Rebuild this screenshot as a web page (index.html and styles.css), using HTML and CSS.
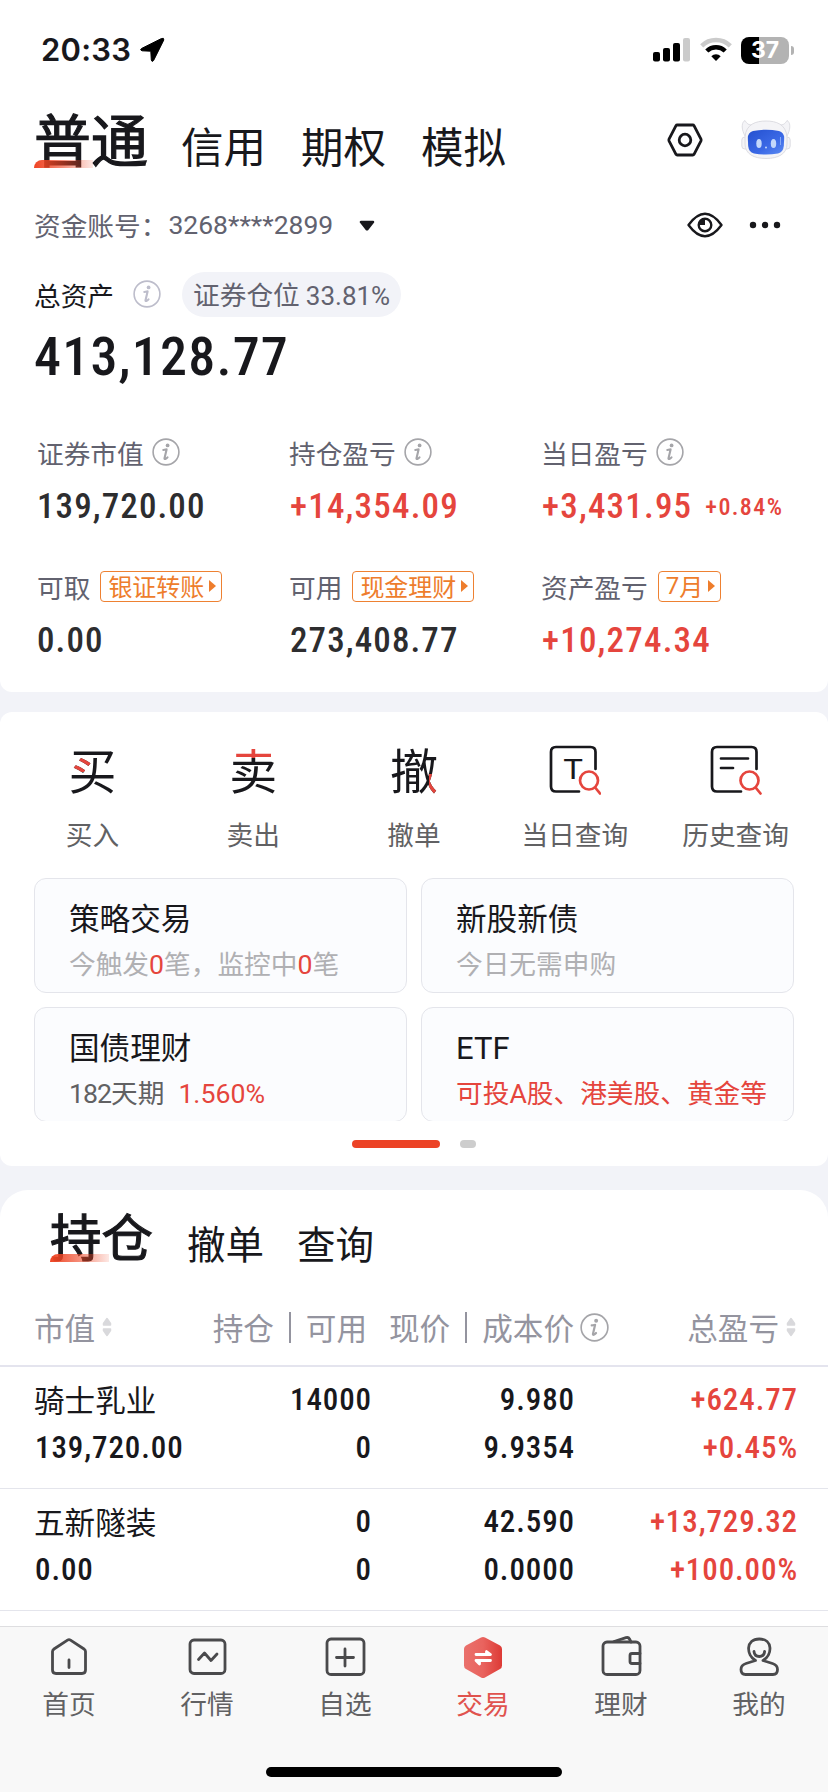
FILE: index.html
```html
<!DOCTYPE html>
<html lang="zh-CN">
<head>
<meta charset="utf-8">
<title>交易</title>
<link rel="stylesheet" href="styles.css">
</head>
<body>
<svg class="defs" width="0" height="0">
  <defs>
    <symbol id="info" viewBox="0 0 28 28">
      <circle cx="14" cy="14" r="12.9" fill="none" stroke="currentColor" stroke-width="1.6"/>
      <circle cx="15.6" cy="7.4" r="1.9" fill="currentColor"/>
      <path d="M11.300 12c2-.2 2.700-.6 3.300-.6L12.500 20.200c-.3 1.500 1.500.9 3-.9" fill="none" stroke="currentColor" stroke-width="2.100" stroke-linecap="round" stroke-linejoin="round"/>
    </symbol>
    <symbol id="sort" viewBox="0 0 10 20">
      <path d="M5 1.500 8.500 6.500V8H1.500V6.500Z M5 18.500 8.500 13.500V12H1.500V13.500Z" fill="#d9d9dc" stroke="#d9d9dc" stroke-width="1.500" stroke-linejoin="round"/>
    </symbol>
    <linearGradient id="hexfill"><stop offset="0" stop-color="#ea716c"/><stop offset=".5" stop-color="#e9635e"/><stop offset="1" stop-color="#dd3a35"/></linearGradient>
    <linearGradient id="face" x1="0" y1="0" x2="1" y2="1"><stop offset="0" stop-color="#2450cf"/><stop offset=".6" stop-color="#3b69e6"/><stop offset="1" stop-color="#5c8bf2"/></linearGradient>
  </defs>
</svg>

<main class="screen">
  <section class="panel account">
    <header class="status">
      <span class="clock">20:33</span>
      <svg class="arrow" width="26" height="26" viewBox="0 0 26 26"><path d="M22.500 1.500 2.500 11.500Q.5 13 3 13.800L11.800 14.200 12.300 23Q12.800 25.500 14.600 23.500L24.800 3Q25.200 .5 22.500 1.500Z" stroke="#000" stroke-width="1"/></svg>
      <svg class="signal" width="38" height="24" viewBox="0 0 38 24"><rect y="14" width="7" height="9.500" rx="2"/><rect x="10" y="10" width="7" height="13.500" rx="2"/><rect x="20" y="5" width="7" height="18.500" rx="2"/><rect x="30" width="7" height="23.500" rx="2" fill="#cbcbcb"/></svg>
      <svg class="wifi" width="32" height="25" viewBox="0 0 32 25"><path d="M1.700 8.800A20.500 20.500 0 0 1 30.300 8.800" fill="none" stroke="#cbcbcb" stroke-width="4.500"/><path d="M6.800 14A13.300 13.300 0 0 1 25.200 14" fill="none" stroke="#000" stroke-width="4.500"/><path d="M16 24 11.300 19.200A6.600 6.600 0 0 1 20.700 19.200Z"/></svg>
      <span class="battery">37</span>
    </header>

    <nav class="modes">
      <span class="mode current">普通</span><span class="mode">信用</span><span class="mode">期权</span><span class="mode">模拟</span>
      <svg class="nut" width="36" height="34" viewBox="0 0 36 34" fill="none" stroke="#18181c" stroke-width="2.800" stroke-linejoin="round"><path d="M10.200 2H25.800Q26.600 2 27 2.700L34 16.200Q34.300 17 34 17.800L27 31.300Q26.600 32 25.800 32H10.200Q9.400 32 9 31.300L2 17.800Q1.700 17 2 16.200L9 2.700Q9.400 2 10.200 2Z"/><circle cx="18" cy="17" r="5.800"/></svg>
      <svg class="robot" width="50" height="40" viewBox="0 0 50 40"><g fill="#f4f4f7" stroke="#d6d6dc" stroke-width=".8"><path d="M3 15C0 8 1 3 4 1.500 6 5 8 6 11 6L12 12 4 17Z"/><path d="M47 15C50 8 49 3 46 1.500 44 5 42 6 39 6L38 12 46 17Z"/><rect x=".8" y="18" width="7" height="12" rx="3"/><rect x="42.200" y="18" width="7" height="12" rx="3"/><path d="M4 18C5 5 15 2 25 2S45 5 46 18V25C46 35 37 39.500 25 39.500S4 35 4 25Z"/></g><path d="M12 12Q25 9.500 38 12Q43 13.500 43.200 19L42.800 27Q42.300 33 37 34.500Q25 36.500 13 34.500Q7.700 33 7.200 27L6.800 19Q7 13.500 12 12Z" fill="url(#face)"/><ellipse cx="18" cy="24.500" rx="2.700" ry="4.500" fill="#c3d8fb"/><ellipse cx="32.500" cy="24.500" rx="2.700" ry="4.500" fill="#c3d8fb"/><circle cx="25" cy="28.500" r="1" fill="#c3d8fb"/><path d="M39.500 18V26" stroke="#86a8f5" stroke-width="1"/></svg>
    </nav>

    <div class="acct">
      <span>资金账号：</span><span class="num acctno">3268****2899</span>
      <svg class="caret" width="16" height="11" viewBox="0 0 16 11"><path d="M2 2H14L8.500 9Q8 9.500 7.500 9Z" fill="#18181c" stroke="#18181c" stroke-width="2.500" stroke-linejoin="round"/></svg>
      <svg class="eye" width="36" height="26" viewBox="0 0 36 26" fill="none" stroke="#18181c" stroke-width="2.400"><path d="M1.500 13C7 5.500 12 1.800 18 1.800S29 5.500 34.500 13C29 20.500 24 24.200 18 24.200S7 20.500 1.500 13Z" stroke-linejoin="round"/><circle cx="18" cy="13" r="6.300"/><path d="M18 13V6.700A6.300 6.300 0 0 0 11.700 13Z" fill="#18181c" stroke="none"/></svg>
      <svg class="more" width="32" height="8" viewBox="0 0 32 8" fill="#18181c"><circle cx="4" cy="4" r="3.200"/><circle cx="16" cy="4" r="3.200"/><circle cx="28" cy="4" r="3.200"/></svg>
    </div>

    <div class="total">
      <span>总资产</span><svg class="info lilac"><use href="#info"/></svg>
      <span class="pill">证券仓位 <b class="num">33.81%</b></span>
    </div>
    <div class="num grand">413,128.77</div>

    <div class="stats">
      <div class="stat"><div class="label">证券市值<svg class="info"><use href="#info"/></svg></div><div class="num value">139,720.00</div></div>
      <div class="stat"><div class="label">持仓盈亏<svg class="info"><use href="#info"/></svg></div><div class="num value up">+14,354.09</div></div>
      <div class="stat"><div class="label">当日盈亏<svg class="info"><use href="#info"/></svg></div><div class="num value up">+3,431.95<small>+0.84%</small></div></div>
      <div class="stat"><div class="label">可取<span class="tag">银证转账<i></i></span></div><div class="num value">0.00</div></div>
      <div class="stat"><div class="label">可用<span class="tag">现金理财<i></i></span></div><div class="num value shift">273,408.77</div></div>
      <div class="stat"><div class="label">资产盈亏<span class="tag"><b class="num">7</b>月<i></i></span></div><div class="num value up">+10,274.34</div></div>
    </div>
  </section>

  <section class="panel services">
    <div class="actions">
      <div class="action"><span class="glyph buy">买</span>买入</div>
      <div class="action"><span class="glyph sell">卖</span>卖出</div>
      <div class="action"><span class="glyph cancel">撤</span>撤单</div>
      <div class="action"><svg class="glyph" width="52" height="52" viewBox="0 0 52 52" fill="none" stroke="#18181c" stroke-width="2.700" stroke-linecap="round"><path d="M30 46.500H7Q2 46.500 2 41.500V7Q2 2 7 2H41.500Q46.500 2 46.500 7V24"/><text transform="translate(24 34) scale(1.18 1)" class="tee">T</text><g stroke="#e5453d"><circle cx="40" cy="35.500" r="9"/><path d="M46.500 43 51 48.500"/></g></svg>当日查询</div>
      <div class="action"><svg class="glyph" width="52" height="52" viewBox="0 0 52 52" fill="none" stroke="#18181c" stroke-width="2.700" stroke-linecap="round"><path d="M31 46.500H7Q2 46.500 2 41.500V7Q2 2 7 2H41.500Q46.500 2 46.500 7V24M11 13.500H38M11 23H23"/><g stroke="#e5453d"><circle cx="39.500" cy="35.500" r="9"/><path d="M46 43 50.500 48.500"/></g></svg>历史查询</div>
    </div>
    <div class="tiles">
      <div class="tile"><h3>策略交易</h3><p>今触发<b class="num up">0</b>笔，监控中<b class="num up">0</b>笔</p></div>
      <div class="tile"><h3>新股新债</h3><p>今日无需申购</p></div>
      <div class="tile"><h3>国债理财</h3><p class="dark"><b class="num days">182</b>天期<b class="num up rate">1.560%</b></p></div>
      <div class="tile"><h3><span class="num etf">ETF</span></h3><p class="up">可投<b class="num">A</b>股、港美股、黄金等</p></div>
    </div>
    <div class="pager"><i class="on"></i><i></i></div>
  </section>

  <section class="panel holdings">
    <nav class="tabs"><span class="tab current">持仓</span><span class="tab">撤单</span><span class="tab">查询</span></nav>
    <div class="row head">
      <div>市值<svg class="sort"><use href="#sort"/></svg></div>
      <div>持仓<i class="bar"></i>可用</div>
      <div>现价<i class="bar"></i>成本价<svg class="info"><use href="#info"/></svg></div>
      <div>总盈亏<svg class="sort"><use href="#sort"/></svg></div>
    </div>
    <div class="row">
      <div><span class="name">骑士乳业</span><span class="num">139,720.00</span></div>
      <div><span class="num">14000</span><span class="num">0</span></div>
      <div><span class="num">9.980</span><span class="num">9.9354</span></div>
      <div class="up"><span class="num">+624.77</span><span class="num">+0.45%</span></div>
    </div>
    <div class="row">
      <div><span class="name">五新隧装</span><span class="num">0.00</span></div>
      <div><span class="num">0</span><span class="num">0</span></div>
      <div><span class="num">42.590</span><span class="num">0.0000</span></div>
      <div class="up"><span class="num">+13,729.32</span><span class="num">+100.00%</span></div>
    </div>
  </section>

  <footer class="dock">
    <div class="items">
      <div class="item"><svg width="44" height="44" viewBox="0 0 44 44"><path d="M20.500 4.200Q22 3.200 23.500 4.200L37 13Q38.500 14 38.500 15.500V34Q38.500 37.500 35 37.500H9Q5.500 37.500 5.500 34V15.500Q5.500 14 7 13ZM22 24V31.500"/></svg>首页</div>
      <div class="item"><svg width="44" height="44" viewBox="0 0 44 44"><rect x="5" y="4" width="35" height="33.500" rx="4"/><path d="M13.500 23.500 19.500 17 26 24.500 32 18"/></svg>行情</div>
      <div class="item"><svg width="44" height="44" viewBox="0 0 44 44"><rect x="4" y="3" width="37" height="35.500" rx="4"/><path d="M22 13V30M13.500 21.500H30.500"/></svg>自选</div>
      <div class="item active"><svg width="44" height="44" viewBox="0 0 44 44"><path class="hex" d="M20 1.400Q22 .4 24 1.400L39 9.500Q41 10.700 41 13V29.500Q41 32 39 33L24 41.600Q22 42.600 20 41.600L5 33Q3 32 3 29.500V13Q3 10.700 5 9.500Z"/><path class="swap" d="M15 18.500H29.500L25.500 15.500V18.500M29.500 24.500H15L18.500 28V24.500"/></svg>交易</div>
      <div class="item"><svg width="44" height="44" viewBox="0 0 44 44"><rect x="4" y="6" width="37" height="32.500" rx="4"/><path d="M15 5.500 27 1.700Q29.500 1 30.500 3L32 6M41 17.500H33Q31 17.500 31 19.500V25.500Q31 27.500 33 27.500H41"/></svg>理财</div>
      <div class="item"><svg width="44" height="44" viewBox="0 0 44 44"><path d="M18.500 24.500C9 19 8.500 3 22.300 3S35.600 19 26 24.500L35.500 27.500Q40.500 29 40.500 33.500Q40.500 38.500 36 38.500H8.500Q4 38.500 4 33.500Q4 29 9 27.500ZM17 15.500Q17.500 20.500 22.300 20.500T27.600 15.500"/></svg>我的</div>
    </div>
    <div class="homebar"></div>
  </footer>
</main>
</body>
</html>
```
FILE: styles.css
```css
* { box-sizing: border-box; }
body {
  margin: 0;
  background: #f2f3f8;
  font-family: "Noto Sans CJK SC", sans-serif;
  color: #18181c;
}
.defs { display: block; height: 0; }
svg { flex: none; }
b { font-weight: 400; line-height: 1; }
.screen { width: 828px; height: 1792px; display: flex; flex-direction: column; overflow: hidden; }
.panel { flex: none; background: #fff; }
.num { font-family: Roboto, "Noto Sans", sans-serif; font-stretch: 87%; }
b.num, .acctno { font-stretch: 100%; }
.up, .tile .up { color: #e5453d; }

.account { height: 692px; border-radius: 0 0 12px 12px; }

.status { display: flex; align-items: center; height: 100px; padding: 0 34px 0 41px; }
.clock { font: 600 31px/40px Inter, sans-serif; letter-spacing: 0.2px; }
.arrow { margin-left: 8px; }
.signal { margin-left: auto; }
.wifi { margin: 0 9px 2px 9px; }
.battery {
  position: relative;
  width: 48px; height: 27px;
  border-radius: 8px;
  background: linear-gradient(90deg, #000 18px, #b3b3b3 18px);
  color: #fff;
  font: 700 23px/27px Inter, sans-serif;
  text-align: center;
  margin-right: 5px;
}
.battery::after {
  content: "";
  position: absolute;
  right: -5px; top: 9px;
  width: 3px; height: 9px;
  border-radius: 0 3px 3px 0;
  background: #b3b3b3;
}

.modes { display: flex; height: 80px; padding: 0 37px 0 34px; gap: 36px; }
.mode { font-size: 42.500px; line-height: 60px; padding-top: 15px; margin-right: -1px; }
.mode.current { font-size: 57px; line-height: 74px; height: 80px; padding: 0; margin-right: -3px; position: relative; -webkit-text-stroke: 1.200px #18181c; }
.current::after {
  content: "";
  position: absolute;
  left: 0; bottom: 12px;
  width: 59px; height: 8px;
  border-radius: 8px 0 0 0;
  background: linear-gradient(90deg, #ef4423, rgba(239, 68, 35, .6) 50%, rgba(239, 68, 35, .12));
}
.nut { margin: 23px 0 0 auto; }
.robot { margin: 19px 0 0 2px; }

.acct { display: flex; align-items: center; height: 90px; padding: 0 47px 0 34px; font-size: 26.7px; color: #62626f; }
.acct > span { padding-bottom: 1px; }
.acctno { font-size: 26.5px; margin-left: 1px; }
.caret { margin-left: 26px; }
.eye { margin-left: auto; }
.more { margin-left: 26px; }

.total { display: flex; align-items: center; height: 46px; margin-top: 1px; padding-left: 34px; font-size: 26.7px; }
.info { width: 28px; height: 28px; color: #a5a5a9; }
.total .info { margin: 0 21px 0 19px; color: #bdbdcb; }
.pill { height: 45px; line-height: 44px; border-radius: 23px; background: #f2f3f8; color: #62626f; padding: 0 11px; white-space: nowrap; }
.pill .num { font-size: 26px; }
.grand { font-size: 54px; font-weight: 500; line-height: 64px; margin: 8px 0 0 34px; letter-spacing: 1.2px; }

.stats { display: grid; grid-template-columns: 252px 252px 1fr; padding: 43px 0 0 37px; }
.stat { height: 134px; }
.label { display: flex; align-items: center; height: 40px; font-size: 26.7px; color: #62626f; white-space: nowrap; }
.label .info { margin-left: 8px; }
.value { font-size: 35px; font-weight: 500; line-height: 40px; margin-top: 15px; letter-spacing: 1.1px; color: #2d2d2f; white-space: nowrap; }
.value.up { color: #e5453d; letter-spacing: 1.200px; }
.value.up, .value.shift { padding-left: 1px; }
.value small { font-size: 24px; line-height: 1; letter-spacing: 1.4px; margin-left: 13px; vertical-align: 3px; }
.tag { display: flex; align-items: center; height: 31px; margin-left: 10px; padding: 0 5px 0 7px; border: 1.500px solid #ee8132; border-radius: 4px; font-size: 24px; line-height: 28px; color: #ee7d2c; }
.tag i { margin-left: 5px; border: 6px solid transparent; border-left: 7px solid #ee7d2c; border-right: 0; }

.services { height: 454px; margin-top: 20px; border-radius: 12px; }
.actions { display: flex; padding: 31px 12px 0; height: 166px; }
.action { flex: 1; display: flex; flex-direction: column; align-items: center; font-size: 26.7px; line-height: 34px; color: #616163; }
.glyph { height: 56px; margin-bottom: 18px; font-size: 48px; line-height: 51px; background-clip: text; -webkit-background-clip: text; color: transparent; }
svg.glyph { margin-top: 2px; height: 52px; margin-bottom: 20px; }
.buy { background-image: linear-gradient(#e5453d, #e5453d), linear-gradient(#18181c, #18181c); background-size: 20px 17px, auto; background-position: 4px 12px, 0 0; background-repeat: no-repeat, repeat; }
.sell { background-image: linear-gradient(#e5453d 15px, #18181c 15px); }
.cancel { background-image: linear-gradient(#e5453d, #e5453d), linear-gradient(#18181c, #18181c); background-size: 9px 20px, auto; background-position: 39px 31px, 0 0; background-repeat: no-repeat, repeat; }
.tee { font: 400 28px Roboto, sans-serif; fill: #18181c; stroke: none; text-anchor: middle; }

.tiles { display: grid; grid-template-columns: 373px 373px; grid-auto-rows: 115px; gap: 14px; height: 243px; padding-left: 34px; overflow: hidden; }
.tile { border: 1.500px solid #e4e5eb; border-radius: 12px; background: #fbfcfe; padding: 18px 0 0 34px; white-space: nowrap; }
.tile h3 { margin: 0; font-size: 30.600px; font-weight: 400; line-height: 40px; height: 40px; }
.tile p { margin: 7px 0 0; font-size: 26.700px; line-height: 38px; color: #b0b0b3; }
.tile p.dark { color: #616163; }
.tile p .days { letter-spacing: -1px; }
.tile p .rate { margin-left: 14px; }
.tile .etf { font-size: 31px; line-height: 1; font-stretch: 100%; }
.pager { display: flex; justify-content: center; gap: 20px; padding-top: 19px; }
.pager i { width: 16px; height: 8px; border-radius: 4px; background: #cdcdcd; }
.pager .on { width: 88px; background: #ec4326; }

.holdings { flex: 1; margin-top: 24px; border-radius: 28px 28px 0 0; }
.tabs { display: flex; height: 96px; padding: 9px 0 0 50px; gap: 35px; }
.tab { font-size: 38.500px; line-height: 54px; padding-top: 16px; margin-right: -2px; }
.tab.current { font-size: 51.500px; line-height: 72px; height: 75px; padding: 0; margin-right: -1px; position: relative; -webkit-text-stroke: 1.100px #18181c; }
.row { display: grid; grid-template-columns: 200px 136px 203px 223px; padding: 9px 0 0 35px; height: 122px; border-bottom: 1px solid #e4e5ec; }
.row > div { display: flex; flex-direction: column; align-items: flex-end; white-space: nowrap; }
.row > div:first-child { align-items: flex-start; }
.row span { font-size: 31px; line-height: 48px; font-weight: 500; letter-spacing: 0.9px; margin-right: -1px; }
.row .name { font-size: 30.600px; font-weight: 400; line-height: 46px; height: 48px; letter-spacing: 0; margin-left: -1px; }
.row.head { grid-template-columns: 170px 163px 242px 187px; height: 81px; padding: 19px 0 0 34px; border-bottom: 2px solid #e4e4ee; font-size: 30.600px; line-height: 44px; color: #94949f; }
.row.head > div { flex-direction: row; justify-content: flex-end; align-items: center; height: 44px; }
.row.head > div:first-child { justify-content: flex-start; }
.bar { width: 2px; height: 31px; margin: 0 15px; background: #94949f; }
.head .info { margin-left: 6px; width: 29px; height: 29px; }
.sort { width: 10px; height: 20px; margin-left: 7px; }

.dock { flex: none; height: 166px; border-top: 1px solid #dedee0; background: #f8f8f8; }
.items { display: flex; padding-top: 9px; }
.item { flex: 1; display: flex; flex-direction: column; align-items: center; font-size: 26.700px; line-height: 38px; color: #616163; }
.item svg { margin-bottom: 4px; fill: none; stroke: #4a4a4c; stroke-width: 2.800; stroke-linecap: round; stroke-linejoin: round; }
.item.active { color: #e0534e; }
.item .hex { fill: url(#hexfill); stroke: none; }
.item .swap { stroke: #fff; stroke-width: 2.800; }
.homebar { width: 296px; height: 10px; margin: 45px auto 0; border-radius: 5px; background: #000; }
```
